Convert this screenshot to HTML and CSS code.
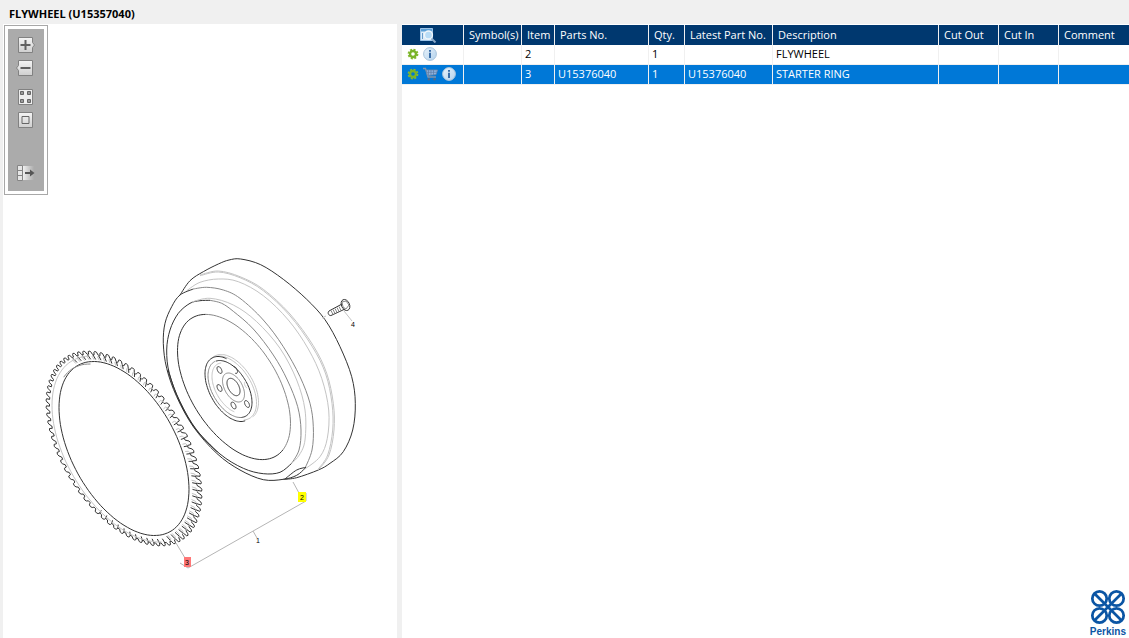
FILE: index.html
```html
<!DOCTYPE html>
<html lang="en">
<head>
<meta charset="utf-8">
<title>FLYWHEEL (U15357040)</title>
<link rel="stylesheet" href="styles.css">
</head>
<body>
<svg class="defs" aria-hidden="true">
  <defs>
    <linearGradient id="btn" x1="0" y1="0" x2="0" y2="1"><stop offset="0" stop-color="#f4f4f4"/><stop offset="1" stop-color="#cfcfcf"/></linearGradient>
    <linearGradient id="fade"><stop offset="0" stop-color="#f0f0f0"/><stop offset="1" stop-color="#ababab"/></linearGradient>
    <linearGradient id="ball" x1="0" y1="0" x2="1" y2="1"><stop offset="0" stop-color="#e9f3fb"/><stop offset="1" stop-color="#b4d2ec"/></linearGradient>
    <symbol id="gear" viewBox="0 0 12 12">
      <circle cx="6" cy="6" r="4.400" fill="none" stroke="#84bb30" stroke-width="2" stroke-dasharray="2 1.450"/>
      <circle cx="6" cy="6" r="3" fill="none" stroke="#7ab32a" stroke-width="2.400"/>
    </symbol>
    <symbol id="info" viewBox="0 0 14 14">
      <circle cx="7" cy="7" r="6.400" fill="url(#ball)" stroke="#a9c4dc" stroke-width="1"/>
      <path d="M6 3h2v1.800H6zM6 5.800h2V11H6z" fill="#3a6ea8"/>
    </symbol>
    <symbol id="cart" viewBox="0 0 15 14">
      <path d="M0 1.500h2.500l2.500 8.500h8" fill="none" stroke="#8494aa" stroke-width="1.300"/>
      <path d="M3 3h11.500l-1.500 4.600-8.400.9z" fill="#8db4e2" stroke="#7187a5" stroke-width=".8"/>
      <path d="M5.500 3v5M8 3v5M10.500 3v5M3.500 5.300h10" stroke="#5f7ba3" stroke-width=".7"/>
      <circle cx="5.800" cy="12.200" r="1.200" fill="#536984"/><circle cx="11.500" cy="12.200" r="1.200" fill="#536984"/>
    </symbol>
  </defs>
</svg>

<header class="title"><h1 class="title-text">FLYWHEEL (U15357040)</h1></header>

<main class="workspace">
  <section class="viewer" aria-label="Illustration">
    <svg class="drawing" viewBox="3 24 394 614" preserveAspectRatio="xMinYMin meet" role="img" aria-label="Exploded view of flywheel and starter ring">
      <g id="ring"></g>
      <g id="wheel"></g>
      <g class="bolt">
        <path class="dark" d="M342 304l-13 7c-2 2 0 5 2 4.500l14-6.500"/>
        <path class="mid" d="M331 310.500l2 4M333 309.500l2 4M335 308.500l2 4M337 307.500l2 4M339 306.500l2 4"/>
        <ellipse class="dark" cx="345.500" cy="305" rx="4" ry="5.800" transform="rotate(-25 345.500 305)"/>
        <path class="mid" d="M342 302l4-1 3 4-3 4-3-2z"/>
        <path class="light" d="M344 311l8 10M322 318l4-2"/>
      </g>
      <path class="leader" d="M293 482l6 11M176 543l9 15M180 563l8 5 118-67v-8M253 531l4 7"/>
      <rect x="298" y="492" width="8" height="10" fill="#ffff00"/>
      <rect x="184" y="557" width="7" height="10" fill="#f77"/>
      <g class="callouts">
        <text x="302" y="500">2</text>
        <text x="187" y="565">3</text>
        <text x="258" y="543">1</text>
        <text x="353" y="327">4</text>
      </g>
    </svg>

    <div class="tools">
      <div class="tools-inner">
        <button class="tool" aria-label="Zoom in"><svg viewBox="0 0 18 16"><path d="M1.500.5h14v5l2 2.500-2 2.500v5h-14z" fill="url(#btn)" stroke="#818181"/><path d="M8.500 3v10M3.500 8h10" stroke="#606060" stroke-width="2"/></svg></button>
        <button class="tool" aria-label="Zoom out"><svg viewBox="0 0 18 16"><path d="M1.500.5h14v15h-14v-5L-.5 8l2-2.500z" fill="url(#btn)" stroke="#818181"/><path d="M3.500 8h10" stroke="#606060" stroke-width="2"/></svg></button>
        <button class="tool tool-gap" aria-label="Fit to window"><svg viewBox="0 0 18 16"><path d="M1.500.5h14v15h-14z" fill="#eee" stroke="#818181"/><path d="M3.500 2.500h3v3h-3zM10.500 2.500h3v3h-3zM3.500 10.500h3v3h-3zM10.500 10.500h3v3h-3z" fill="#999" stroke="#666"/></svg></button>
        <button class="tool" aria-label="Actual size"><svg viewBox="0 0 18 16"><path d="M1.500.5h14v15h-14z" fill="url(#btn)" stroke="#818181"/><path d="M5 4.500h7v7H5z" fill="none" stroke="#666"/></svg></button>
        <button class="tool tool-last" aria-label="Toggle list"><svg viewBox="0 0 18 16"><path d="M6 1h11v14H6z" fill="url(#fade)"/><path d="M.5.5h5v15h-5zM.5 5.500h5M.5 10.500h5" fill="#e6e6e6" stroke="#858585"/><path d="M8 8h6" stroke="#555" stroke-width="2"/><path d="M13 4.500L17.500 8 13 11.500z" fill="#555"/></svg></button>
      </div>
    </div>
  </section>

  <div class="splitter"></div>

  <section class="parts">
    <table class="grid">
      <colgroup><col class="c-act"><col class="c-sym"><col class="c-item"><col class="c-no"><col class="c-qty"><col class="c-latest"><col class="c-desc"><col class="c-cut"><col class="c-cut"><col></colgroup>
      <thead>
        <tr>
          <th class="act-head" aria-label="Actions"><svg class="find" viewBox="0 0 17 16"><path d="M.5 1.500h12v12H.5z" fill="#dcebf8" stroke="#9cc3e6"/><path d="M1 2h11v2.500H1z" fill="#5b9fd6"/><path d="M2.500 6v6" stroke="#679dcc"/><circle cx="8.500" cy="8" r="4" fill="#b8dcf6" stroke="#f2f7fb" stroke-width="1.300"/><path d="M11.500 11.500l4 4" stroke="#8aa9c9" stroke-width="2"/></svg></th>
          <th>Symbol(s)</th><th>Item</th><th>Parts No.</th><th>Qty.</th><th>Latest Part No.</th><th>Description</th><th>Cut Out</th><th>Cut In</th><th>Comment</th>
        </tr>
      </thead>
      <tbody>
        <tr>
          <td><div class="icons"><svg class="i-gear"><use href="#gear"/></svg><svg class="i-info"><use href="#info"/></svg></div></td>
          <td></td><td>2</td><td></td><td>1</td><td></td><td>FLYWHEEL</td><td></td><td></td><td></td>
        </tr>
        <tr class="selected">
          <td><div class="icons"><svg class="i-gear"><use href="#gear"/></svg><svg class="i-cart"><use href="#cart"/></svg><svg class="i-info"><use href="#info"/></svg></div></td>
          <td></td><td>3</td><td>U15376040</td><td>1</td><td>U15376040</td><td>STARTER RING</td><td></td><td></td><td></td>
        </tr>
      </tbody>
    </table>
    <div class="brand">
      <svg class="brand-mark" viewBox="0 0 34 34" aria-hidden="true">
        <g fill="none" stroke="#0b55a4" stroke-width="2.600">
          <circle cx="9" cy="9" r="6.800"/><circle cx="25" cy="9" r="6.800"/><circle cx="9" cy="25" r="6.800"/><circle cx="25" cy="25" r="6.800"/>
          <path d="M3.500 3.500l27 27M30.500 3.500l-27 27"/>
        </g>
      </svg>
      <span class="brand-name">Perkins</span>
    </div>
  </section>
</main>
<script src="drawing.js"></script>
</body>
</html>
```
FILE: styles.css
```css
* { box-sizing: border-box; }
body {
  margin: 0;
  min-height: 100vh;
  display: flex;
  flex-direction: column;
  background: #f0f0f0;
  color: #000;
  font: 11px/16px "Open Sans", "Noto Sans", sans-serif;
}
.defs { position: absolute; width: 0; height: 0; }
.title { height: 24px; padding: 6px 9px 0; }
.title-text { margin: 0; font-size: 11px; line-height: 16px; font-weight: 700; }
.workspace {
  flex: 1;
  display: grid;
  grid-template-columns: 394fr 5px 727fr;
  padding-left: 3px;
}
.viewer { position: relative; background: #fff; overflow: hidden; }
.drawing { display: block; width: 100%; }
.drawing path, .drawing ellipse { fill: none; vector-effect: non-scaling-stroke; }
.drawing .dark { stroke: #333; stroke-width: 1; }
.drawing .mid { stroke: #888; stroke-width: 1; }
.drawing .light { stroke: #c4c4c4; stroke-width: 1; }
.drawing .leader { stroke: #b5b5b5; stroke-width: 1; }
.drawing .tooth { fill: #fff; }
.callouts { font: 7px "Liberation Sans", sans-serif; text-anchor: middle; }

.tools {
  position: absolute;
  top: 1px;
  left: 1px;
  padding: 3px;
  background: #fff;
  border: 1px solid #a8a8a8;
}
.tools-inner {
  display: flex;
  flex-direction: column;
  align-items: center;
  gap: 7px;
  width: 36px;
  padding: 8px 0 10px;
  background: #ababab;
}
.tool { display: block; padding: 0; border: 0; background: none; width: 18px; height: 16px; }
.tool svg { display: block; width: 18px; height: 16px; overflow: visible; }
.tool-gap { margin-top: 6px; }
.tool-last { margin-top: 30px; }

.splitter { background: #f0f0f0; }
.parts { position: relative; background: #fff; }
.grid { width: 100%; margin-top: 1px; table-layout: fixed; border-collapse: separate; border-spacing: 0; }
.c-act { width: 62px; }
.c-sym { width: 58px; }
.c-item { width: 33px; }
.c-no { width: 94px; }
.c-qty { width: 36px; }
.c-latest { width: 88px; }
.c-desc { width: 166px; }
.c-cut { width: 60px; }
.grid th, .grid td {
  border-right: 1px solid #f0f0f0;
  white-space: nowrap;
  overflow: hidden;
  text-align: left;
}
.grid th:last-child, .grid td:last-child { border-right: 0; }
.grid th { height: 20px; padding: 0 0 0 5px; background: #00386f; color: #fff; font-weight: 400; }
.grid td { height: 20px; padding: 0 0 2px 3px; border-bottom: 1px solid #f0f0f0; }
.grid .act-head { padding: 0; }
.find { display: block; width: 17px; height: 16px; margin-left: 18px; }
.selected td { background: #0078d7; color: #fff; }
.icons { display: flex; align-items: center; gap: 4px; padding-left: 2px; }
.i-gear { width: 12px; height: 12px; }
.i-info { width: 14px; height: 14px; }
.i-cart { width: 15px; height: 14px; }

.brand {
  position: absolute;
  right: 3px;
  bottom: 0;
  display: flex;
  flex-direction: column;
  align-items: center;
  color: #0b55a4;
}
.brand-mark { width: 36px; height: 36px; }
.brand-name { font: 700 10px/13px "Liberation Sans", sans-serif; }
```
FILE: drawing.js
```js
const NS = 'http://www.w3.org/2000/svg';
const ring = document.getElementById('ring');
const wheel = document.getElementById('wheel');

function path(parent, d, cls) {
  const p = document.createElementNS(NS, 'path');
  p.setAttribute('d', d);
  p.setAttribute('class', cls);
  parent.appendChild(p);
}

// Point on a skewed ellipse; t and skew in degrees.
function pt(cx, cy, a, b, skew, t) {
  const r = Math.PI / 180;
  return [cx + a * Math.cos(t * r), cy + b * Math.sin((t + skew) * r)];
}
const f = p => p[0].toFixed(1) + ' ' + p[1].toFixed(1);

function arc(parent, cx, cy, a, b, skew, from, to, cls) {
  let d = '';
  for (let t = from; t <= to; t += 3) d += (d ? 'L' : 'M') + f(pt(cx, cy, a, b, skew, t));
  path(parent, d, cls);
}

// Smooth curve through points given on the wheel's tripled grid.
function curve(list, cls) {
  const p = list.map(q => [150 + q[0] / 3, 250 + q[1] / 3]);
  let d = 'M' + f(p[0]);
  for (let i = 0; i < p.length - 1; i++) {
    const a = p[i - 1] || p[i], b = p[i], c = p[i + 1], e = p[i + 2] || c;
    d += 'C' + f([b[0] + (c[0] - a[0]) / 6, b[1] + (c[1] - a[1]) / 6]) + ' '
      + f([c[0] - (e[0] - b[0]) / 6, c[1] - (e[1] - b[1]) / 6]) + ' ' + f(c);
  }
  path(wheel, d, cls);
}

// Starter ring: shallow teeth on the near side, long flanks on the far side
const R = (g, t) => pt(124, 448.5, 66 + g, 87 + g * 0.88, 28, t);
const N = 76;
const step = 360 / N;
let outline = '';
for (let i = 0; i < N; i++) {
  const t = i * step;
  const w = Math.max(0, Math.cos((t + 40) * Math.PI / 180));
  const root = 8.5 - 1.5 * w, tip = 12;
  outline += (i ? 'L' : 'M') + f(R(root, t)) + 'L' + f(R(tip - 1, t + step * 0.15))
    + 'Q' + f(R(tip + 0.8, t + step * 0.35)) + ' ' + f(R(tip - 0.5, t + step * 0.6))
    + 'L' + f(R(root, t + step * 0.7));
}
path(ring, outline + 'Z', 'dark tooth');
for (let i = 0; i < N; i++) {
  const t = i * step;
  const w = Math.cos((t + 40) * Math.PI / 180);
  if (w > -0.1) {
    path(ring, 'M' + f(R(2, t - step * 0.5)) + 'L' + f(R(6, t - step * 0.55)) + 'L' + f(R(8, t - step * 0.1)), 'light');
    path(ring, 'M' + f(R(2.5, t - step * 0.15)) + 'L' + f(R(7.5, t - step * 0.25)), 'dark');
  } else if (t > 50 && t < 110) {
    path(ring, 'M' + f(R(4, t)) + 'L' + f(R(9, t)), 'dark');
  }
}
arc(ring, 124, 448.5, 65, 87, 28, 0, 360, 'dark');
arc(ring, 125, 449, 73, 93, 28, 60, 240, 'light');
arc(ring, 120, 451, 65, 87, 28, 210, 245, 'mid');

// Flywheel rim
curve([[90,135],[120,92],[160,65],[205,42],[237,30],[272,27],[332,44],[400,88],[470,148],[525,209],[570,290],[605,380],[616,460],[608,540],[580,605],[540,640],[505,660],[440,683],[400,688]], 'dark');
curve([[150,75],[205,63],[270,80],[340,118],[420,192],[490,287],[530,370],[550,460],[552,540],[537,615],[505,660]], 'light');
curve([[150,77],[205,66],[270,83],[340,122],[418,195],[487,290],[527,372],[546,460],[548,540],[533,615],[505,657]], 'light');
curve([[110,122],[150,97],[205,87],[265,95],[340,137],[415,210],[475,297],[515,385],[536,480],[532,565],[510,620],[465,657]], 'light');

// Front face
curve([[130,117],[90,135],[65,170],[45,220],[40,280],[50,355],[80,440],[130,530],[200,610],[270,660],[340,689],[400,688],[440,676],[465,655]], 'dark');
curve([[465,655],[486,600],[490,530],[480,460],[450,380],[400,290],[340,210],[270,145],[220,120],[170,112],[130,117]], 'mid');
curve([[180,151],[150,152],[120,160],[85,190],[60,240],[50,300],[58,370],[90,455],[140,540],[210,612],[280,655],[340,671],[390,667],[425,640]], 'dark');
curve([[54,360],[83,442],[133,532],[203,607]], 'dark');
curve([[425,640],[447,600],[453,540],[443,470],[412,390],[370,315],[310,237],[250,184],[215,160],[180,151]], 'mid');
curve([[125,156],[180,145],[250,165],[320,215],[390,295],[440,390],[465,480],[465,570],[448,615],[425,640]], 'light');
curve([[405,687],[440,660],[468,652]], 'dark');
arc(wheel, 234, 387, 56.500, 72.600, 30, 30, 240, 'dark');
arc(wheel, 234, 387, 56.500, 72.600, 30, -120, 30, 'mid');

// Hub
arc(wheel, 233, 387, 25.500, 32.500, 28, -150, 40, 'light');
arc(wheel, 231, 388, 25.500, 32, 28, -120, 60, 'light');
arc(wheel, 229.500, 389, 24.500, 32.500, 28, 50, 265, 'dark');
arc(wheel, 230, 389, 22, 28.500, 28, -130, 60, 'dark');
arc(wheel, 230, 389, 22, 28.500, 28, 60, 230, 'mid');
arc(wheel, 231, 388, 19, 25, 28, 80, 240, 'light');
arc(wheel, 233.500, 387, 6.500, 8.700, 28, 0, 360, 'dark');
arc(wheel, 233.500, 387.500, 11, 14.500, 28, 0, 360, 'mid');
for (const h of [[219.500,370],[219.500,388],[233.500,405.500],[247,404]]) {
  arc(wheel, h[0], h[1], 2.500, 3.400, 28, 0, 360, 'dark');
}
arc(wheel, 235, 370, 2.500, 3.400, 28, -120, 90, 'dark');
arc(wheel, 247, 385, 2.500, 3.400, 28, 90, 270, 'light');
```
